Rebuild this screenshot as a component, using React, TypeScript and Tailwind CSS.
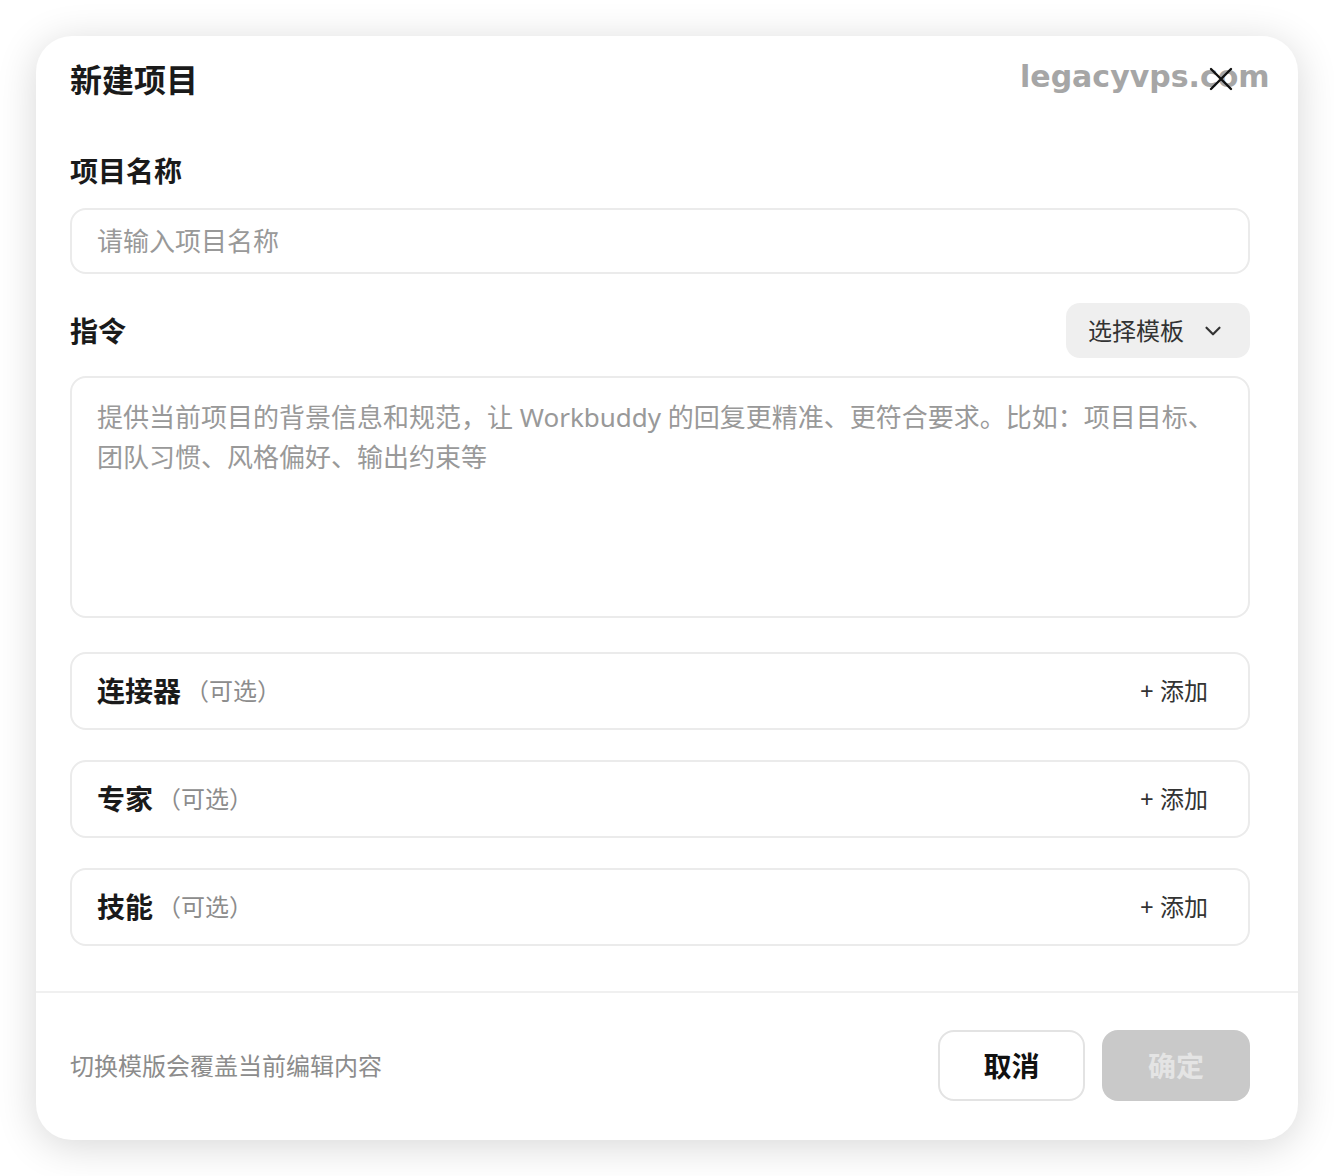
import { ChevronDown } from "lucide-react";

const sections = ["连接器", "专家", "技能"];

function OptionRow({ title }: { title: string }) {
  return (
    <div className="h-[78px] rounded-[16px] border-2 border-[#ebebeb] flex items-center justify-between pl-[25px] pr-[40px]">
      <div className="flex items-center">
        <span className="text-[28px] font-semibold text-[#1a1a1a]">{title}</span>
        <span className="text-[24px] text-[#8c8c8c] ml-[4px]">（可选）</span>
      </div>
      <span className="text-[24px] text-[#333]">+ 添加</span>
    </div>
  );
}

export default function App() {
  return (
    <div className="w-[1334px] h-[1176px] bg-white p-[36px] relative font-['Noto_Sans','Noto_Sans_CJK_SC',sans-serif]">
      <div className="absolute left-[1020px] top-[59px] text-[30px] leading-[36px] font-bold text-[#a6a6a6] font-['DejaVu_Sans',sans-serif]">
        legacyvps.com
      </div>

      <div className="relative w-[1262px] h-[1104px] rounded-[36px] shadow-[0_6px_40px_rgba(0,0,0,0.16)] flex flex-col overflow-hidden">
        <div className="pl-[34px] pr-[48px] pt-[22px] flex flex-col">
          <div className="h-[44px] flex items-center justify-between">
            <h1 className="text-[32px] leading-[44px] font-semibold text-[#1a1a1a]">新建项目</h1>
            <svg width="24" height="24" viewBox="0 0 24 24" className="mr-[17px] -mt-[2px]">
              <path d="M2 2 L22 22 M22 2 L2 22" stroke="#111" strokeWidth="2.4" strokeLinecap="round" />
            </svg>
          </div>

          <label className="mt-[49px] text-[28px] leading-[40px] font-semibold text-[#1a1a1a]">项目名称</label>
          <input
            className="mt-[17px] h-[66px] rounded-[16px] border-2 border-[#ebebeb] bg-white px-[25px] text-[26px] text-[#222] outline-none placeholder:text-[#999]"
            placeholder="请输入项目名称"
          />

          <div className="mt-[29px] h-[55px] flex items-center justify-between">
            <span className="text-[28px] leading-[40px] font-semibold text-[#1a1a1a]">指令</span>
            <button className="h-[55px] w-[184px] rounded-[14px] bg-[#efefef] flex items-center pl-[22px] gap-[16px] text-[24px] text-[#333]">
              选择模板
              <ChevronDown size={26} strokeWidth={2} color="#333" />
            </button>
          </div>

          <textarea
            className="mt-[18px] h-[242px] resize-none rounded-[16px] border-2 border-[#ebebeb] bg-white px-[25px] py-[19px] text-[26px] leading-[40px] text-[#222] outline-none placeholder:text-[#999]"
            placeholder="提供当前项目的背景信息和规范，让 Workbuddy 的回复更精准、更符合要求。比如：项目目标、团队习惯、风格偏好、输出约束等"
          />

          <div className="mt-[34px] flex flex-col gap-[30px]">
            {sections.map((s) => (
              <OptionRow key={s} title={s} />
            ))}
          </div>
        </div>

        <div className="mt-[45px] border-t-2 border-[#f0f0f0] pl-[34px] pr-[48px] pt-[37px] flex items-center justify-between">
          <span className="text-[24px] text-[#8c8c8c]">切换模版会覆盖当前编辑内容</span>
          <div className="flex gap-[17px]">
            <button className="w-[147px] h-[71px] rounded-[16px] border-2 border-[#e3e3e3] bg-white text-[28px] font-semibold text-[#111]">
              取消
            </button>
            <button className="w-[148px] h-[71px] rounded-[16px] bg-[#c9c9c9] text-[28px] font-semibold text-[#e4e4e4]">
              确定
            </button>
          </div>
        </div>
      </div>
    </div>
  );
}
